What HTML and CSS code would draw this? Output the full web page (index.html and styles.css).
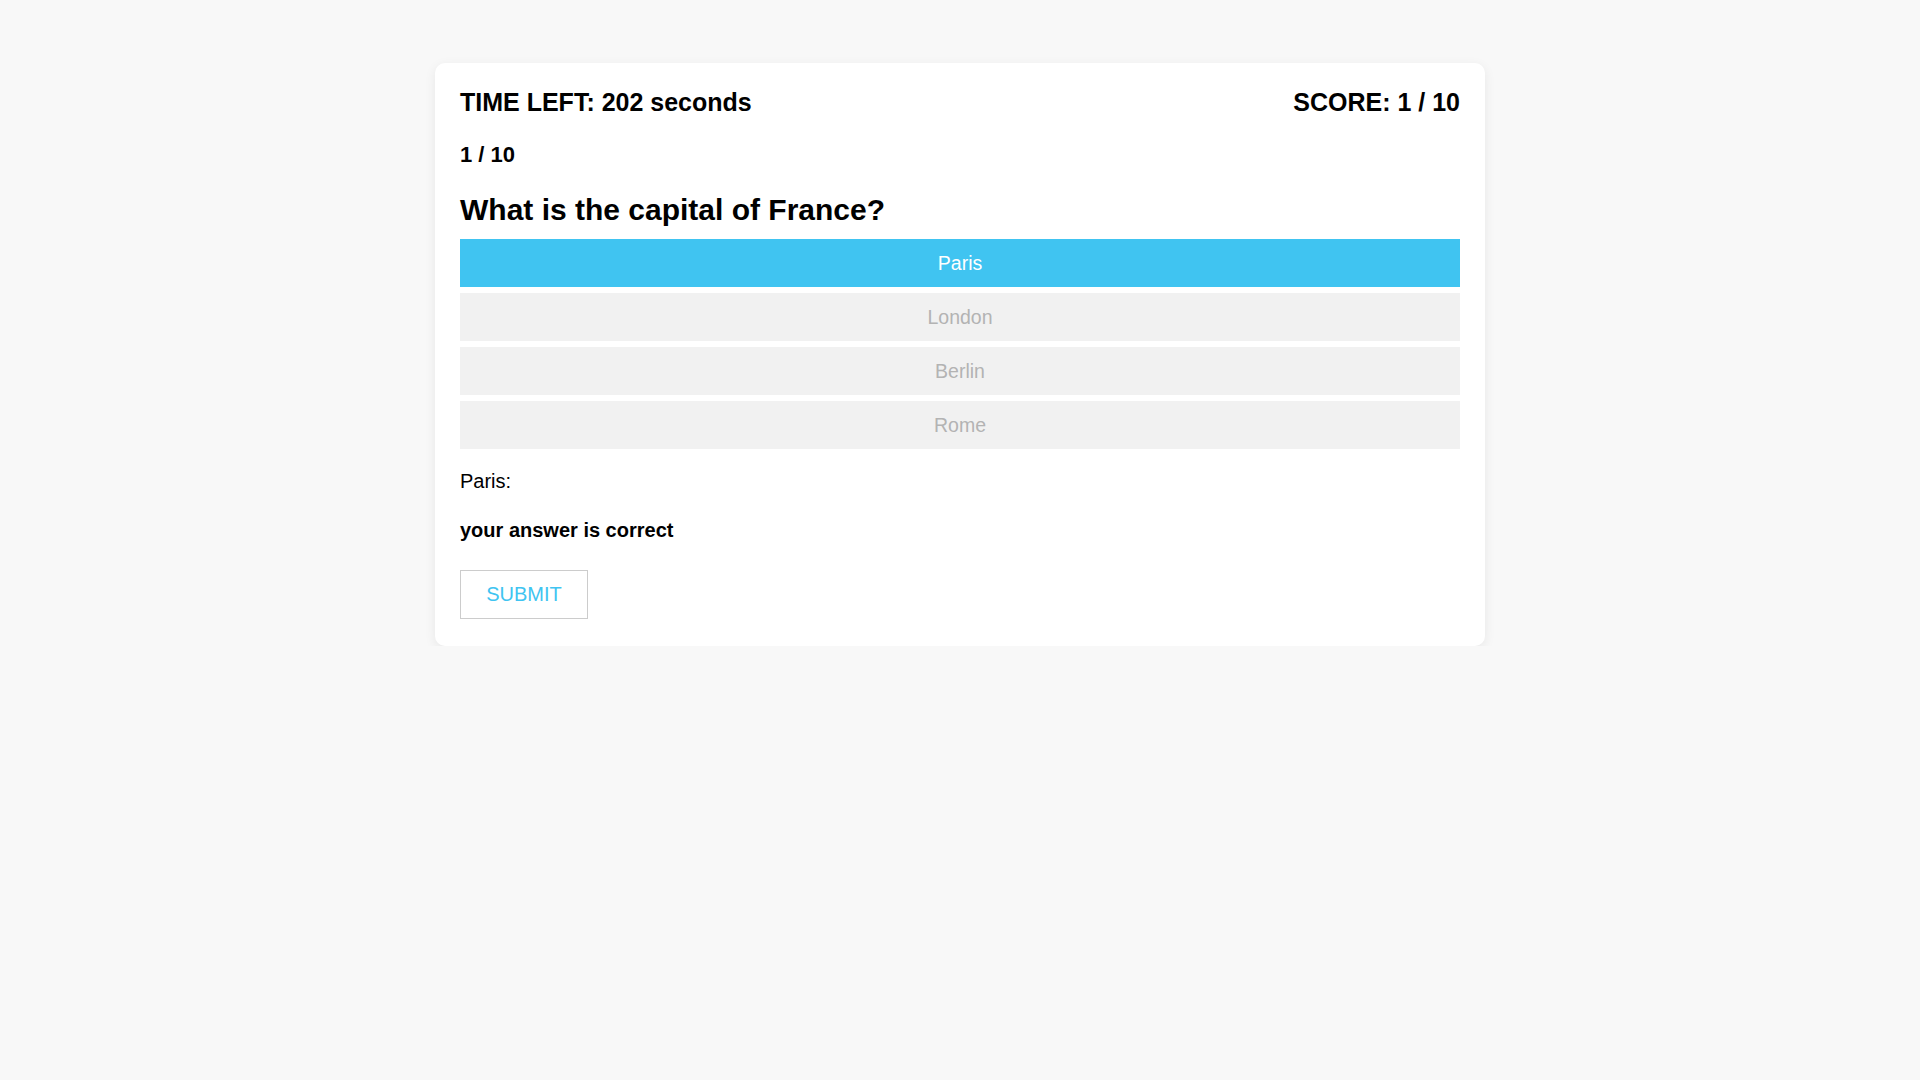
FILE: index.html
```html
<!DOCTYPE html>
<html lang="en">
<head>
<meta charset="utf-8">
<title>Quiz</title>
<link rel="stylesheet" href="styles.css">
</head>
<body>
<div class="page">
  <div class="card">
    <div class="topbar">
      <div class="timer">TIME LEFT: 202 seconds</div>
      <div class="score">SCORE: 1 / 10</div>
    </div>
    <div class="progress">1 / 10</div>
    <div class="question">What is the capital of France?</div>
    <div class="options">
      <div class="option selected">Paris</div>
      <div class="option">London</div>
      <div class="option">Berlin</div>
      <div class="option">Rome</div>
    </div>
    <div class="answer">Paris:</div>
    <div class="result">your answer is correct</div>
    <button class="submit">SUBMIT</button>
  </div>
</div>
</body>
</html>
```

FILE: styles.css
```css
html, body {
  margin: 0;
  padding: 0;
  background: #f8f8f8;
  font-family: "Liberation Sans", Arial, sans-serif;
  color: #000;
}
.page {
  display: flex;
  justify-content: center;
  padding-top: 63px;
}
.card {
  width: 1000px;
  padding: 25px 25px 27px;
  background: #fff;
  border-radius: 10px;
  box-shadow: 0 3px 12px rgba(0,0,0,0.07);
  display: flex;
  flex-direction: column;
  align-items: stretch;
}
.topbar {
  display: flex;
  justify-content: space-between;
  font-weight: bold;
  font-size: 25px;
  line-height: 29px;
}
.progress {
  margin-top: 25px;
  font-weight: bold;
  font-size: 22px;
  line-height: 25px;
}
.question {
  margin-top: 25px;
  font-weight: bold;
  font-size: 30px;
  line-height: 35px;
}
.options {
  margin-top: 12px;
  display: flex;
  flex-direction: column;
  gap: 6px;
}
.option {
  height: 48px;
  display: flex;
  align-items: center;
  justify-content: center;
  background: #f1f1f1;
  color: #b3b3b3;
  font-size: 19.5px;
}
.option.selected {
  background: #40c4f1;
  color: #fff;
}
.answer {
  margin-top: 20.5px;
  font-size: 20px;
  line-height: 23px;
}
.result {
  margin-top: 26px;
  font-size: 20px;
  font-weight: bold;
  line-height: 23px;
}
.submit {
  margin-top: 28px;
  align-self: flex-start;
  width: 128px;
  height: 49px;
  padding: 0;
  background: #fff;
  border: 1px solid #cccccc;
  color: #40c4f1;
  font-family: "Liberation Sans", Arial, sans-serif;
  font-size: 20px;
}
```
